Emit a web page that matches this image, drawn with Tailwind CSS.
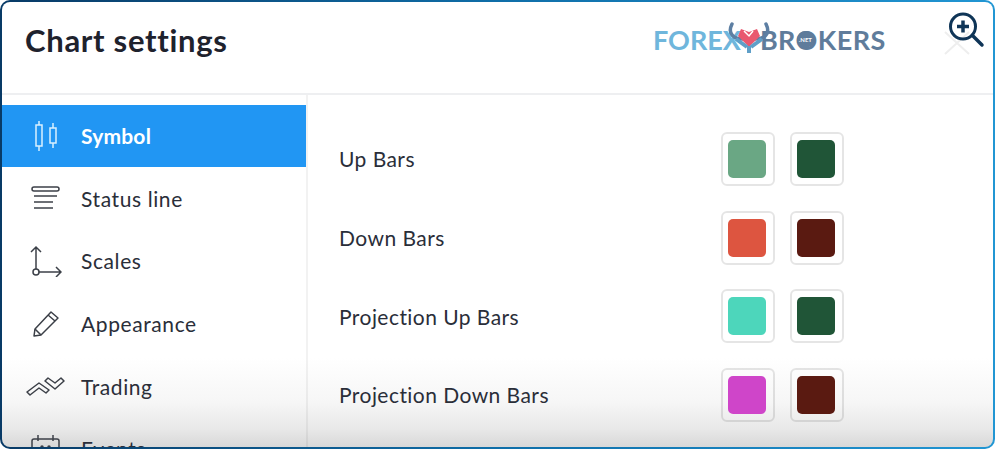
<!DOCTYPE html>
<html lang="en">
<head>
  <meta charset="UTF-8">
  <title>Chart settings</title>
  <script src="https://cdn.jsdelivr.net/npm/@tailwindcss/browser@4"></script>
</head>
<body class="bg-white">
  <div class="relative w-[995px] h-[449px] overflow-hidden rounded-[10px] bg-gradient-to-r from-[#083a66] via-[#0f6ea8] to-[#2196d3] p-[2px] font-['Lato','Noto_Sans',sans-serif]">
    <div class="relative flex flex-col w-full h-full overflow-hidden rounded-[8px] bg-[linear-gradient(to_bottom,#ffffff_80%,#f6f6f6_90%,#e8e8e8_96%,#d8d8d8_100%)] text-[#2a2e39]">

      <!-- header -->
      <header class="relative flex items-center h-[93px] shrink-0 border-b-2 border-[#eeeff1] pl-[23px] pb-[14px]">
        <h1 class="text-[31px] font-bold tracking-[0.7px] text-[#1e222d]">Chart settings</h1>
        <div class="absolute left-[651px] top-[21px] flex items-center gap-[19px] text-[27px] font-bold leading-[34px]">
          <span class="text-[#6fb6dc]">FOREX</span>
          <span class="relative tracking-[0.4px] text-[#5f7c9b]">BROKERS
            <span class="absolute left-[37px] top-[8px] flex items-center justify-center size-[17px] rounded-full bg-[#5f7c9b] text-[6px] leading-none text-white tracking-normal">.NET</span>
          </span>
          <svg width="46" height="32" viewBox="0 0 46 32" class="absolute left-[73px] -top-[1px]" fill="none">
            <path d="M6 2C1 12 8 17 17 17M40 2C45 12 38 17 29 17" stroke="#5d7fa3" stroke-width="3.5" stroke-linecap="round"/>
            <path d="M15 7l8 3 8-3 3 7-11 11-11-11z" fill="#e9586f"/>
            <path d="M18 9l5 5 4-5" stroke="#ffffff" stroke-width="1.5"/>
            <path d="M23 24v7M10 17l11 8M36 17l-11 8" stroke="#5f9fc8" stroke-width="4"/>
          </svg>
        </div>
        <svg width="28" height="24" viewBox="0 0 28 24" class="absolute left-[941px] top-[29px]" fill="none" stroke="#eeeeee" stroke-width="2">
          <path d="M2 1l24 22M26 1L2 23"/>
        </svg>
        <svg width="38" height="38" viewBox="0 0 38 38" class="absolute left-[946px] top-[10px]" fill="none" stroke="#0f3557" stroke-linecap="round">
          <circle cx="15" cy="14.5" r="12.5" stroke-width="3"/>
          <path d="M15 8.5v12M9 14.5h12" stroke-width="3.5" stroke-linecap="butt"/>
          <path d="M25 24l9 9" stroke-width="3.5"/>
        </svg>
      </header>

      <div class="flex flex-1 min-h-0">
        <!-- sidebar -->
        <nav class="w-[306px] shrink-0 border-r-2 border-black/5 pt-[10px] text-[21px] tracking-[0.6px]">
          <a class="flex items-center h-[62px] bg-[#2196f3] font-bold tracking-[0.2px] text-white">
            <span class="flex justify-center w-[79px] pl-[9px]">
              <svg width="26" height="32" viewBox="0 0 26 32" fill="none" stroke="#d9f1ff" stroke-width="1.5">
                <rect x="3" y="5" width="6" height="21"/>
                <path d="M6 1v4M6 26v5"/>
                <rect x="17" y="8" width="6" height="15"/>
                <path d="M20 3v5M20 23v5"/>
              </svg>
            </span>
            Symbol
          </a>
          <a class="flex items-center h-[63px]">
            <span class="flex justify-center w-[79px] pl-[9px]">
              <svg width="30" height="28" viewBox="0 0 30 28" fill="none" stroke="#3c4048" stroke-width="1.5">
                <rect x="1" y="2" width="27" height="4" rx="2"/>
                <path d="M3 11h23M3 17h19M3 23h19"/>
              </svg>
            </span>
            Status line
          </a>
          <a class="flex items-center h-[62px]">
            <span class="flex justify-center w-[79px] pl-[9px]">
              <svg width="32" height="32" viewBox="0 0 32 32" fill="none" stroke="#3c4048" stroke-width="1.5">
                <circle cx="6" cy="27" r="3"/>
                <path d="M6 24V2M1 7l5-5 5 5M9 27h22M26 22l5 5-5 5"/>
              </svg>
            </span>
            Scales
          </a>
          <a class="flex items-center h-[63px]">
            <span class="flex justify-center w-[79px] pl-[9px]">
              <svg width="28" height="28" viewBox="0 0 28 28" fill="none" stroke="#3c4048" stroke-width="1.5" stroke-linejoin="round">
                <path d="M2 26l1-7L19 2l7 6L9 25z"/>
                <path d="M3 19l6 6M16 5l7 6"/>
              </svg>
            </span>
            Appearance
          </a>
          <a class="flex items-center h-[63px]">
            <span class="flex justify-center w-[79px] pl-[9px]">
              <svg width="40" height="20" viewBox="0 0 40 20" fill="none" stroke="#3c4048" stroke-width="1.5" stroke-linejoin="round">
                <path d="M1 15L13 6l10 7-3 3-7-5-9 7zM19 4l3-3 7 5 6-5 3 3-9 8z"/>
              </svg>
            </span>
            Trading
          </a>
          <a class="flex items-center h-[62px]">
            <span class="flex justify-center w-[79px] pl-[9px]">
              <svg width="30" height="28" viewBox="0 0 30 28" fill="none" stroke="#3c4048" stroke-width="1.5">
                <rect x="1" y="4" width="27" height="22" rx="2"/>
                <path d="M7 0v6M22 0v6"/>
                <circle cx="11" cy="12" r="1" fill="#3c4048"/>
                <circle cx="18" cy="12" r="1" fill="#3c4048"/>
              </svg>
            </span>
            Events
          </a>
        </nav>

        <!-- colour rows -->
        <section class="flex-1 flex flex-col gap-[24.7px] pt-[37px] pl-[31px] text-[21px] tracking-[0.45px]">
          <div class="flex items-center h-[54px] shrink-0">
            <span class="w-[382px]">Up Bars</span>
            <div class="flex gap-[15px]">
              <button class="flex items-center justify-center size-[54px] rounded-[6px] border-2 border-black/10"><span class="block size-[38px] mr-[2px] rounded-[5px] bg-[#6aa784]"></span></button>
              <button class="flex items-center justify-center size-[54px] rounded-[6px] border-2 border-black/10"><span class="block size-[38px] mr-[2px] rounded-[5px] bg-[#205537]"></span></button>
            </div>
          </div>
          <div class="flex items-center h-[54px] shrink-0">
            <span class="w-[382px]">Down Bars</span>
            <div class="flex gap-[15px]">
              <button class="flex items-center justify-center size-[54px] rounded-[6px] border-2 border-black/10"><span class="block size-[38px] mr-[2px] rounded-[5px] bg-[#dd5540]"></span></button>
              <button class="flex items-center justify-center size-[54px] rounded-[6px] border-2 border-black/10"><span class="block size-[38px] mr-[2px] rounded-[5px] bg-[#5a1a11]"></span></button>
            </div>
          </div>
          <div class="flex items-center h-[54px] shrink-0">
            <span class="w-[382px]">Projection Up Bars</span>
            <div class="flex gap-[15px]">
              <button class="flex items-center justify-center size-[54px] rounded-[6px] border-2 border-black/10"><span class="block size-[38px] mr-[2px] rounded-[5px] bg-[#4dd6bb]"></span></button>
              <button class="flex items-center justify-center size-[54px] rounded-[6px] border-2 border-black/10"><span class="block size-[38px] mr-[2px] rounded-[5px] bg-[#205537]"></span></button>
            </div>
          </div>
          <div class="flex items-center h-[54px] shrink-0">
            <span class="w-[382px]">Projection Down Bars</span>
            <div class="flex gap-[15px]">
              <button class="flex items-center justify-center size-[54px] rounded-[6px] border-2 border-black/10"><span class="block size-[38px] mr-[2px] rounded-[5px] bg-[#cf45c9]"></span></button>
              <button class="flex items-center justify-center size-[54px] rounded-[6px] border-2 border-black/10"><span class="block size-[38px] mr-[2px] rounded-[5px] bg-[#5a1a11]"></span></button>
            </div>
          </div>
          <div class="flex items-center h-[54px] shrink-0">
            <span class="w-[382px]"></span>
            <div class="flex gap-[15px]">
              <button class="size-[54px] rounded-[6px] border-2 border-[#c4ccd2]"></button>
              <button class="size-[54px] rounded-[6px] border-2 border-[#c4ccd2]"></button>
            </div>
          </div>
        </section>
      </div>
    </div>
  </div>
</body>
</html>
